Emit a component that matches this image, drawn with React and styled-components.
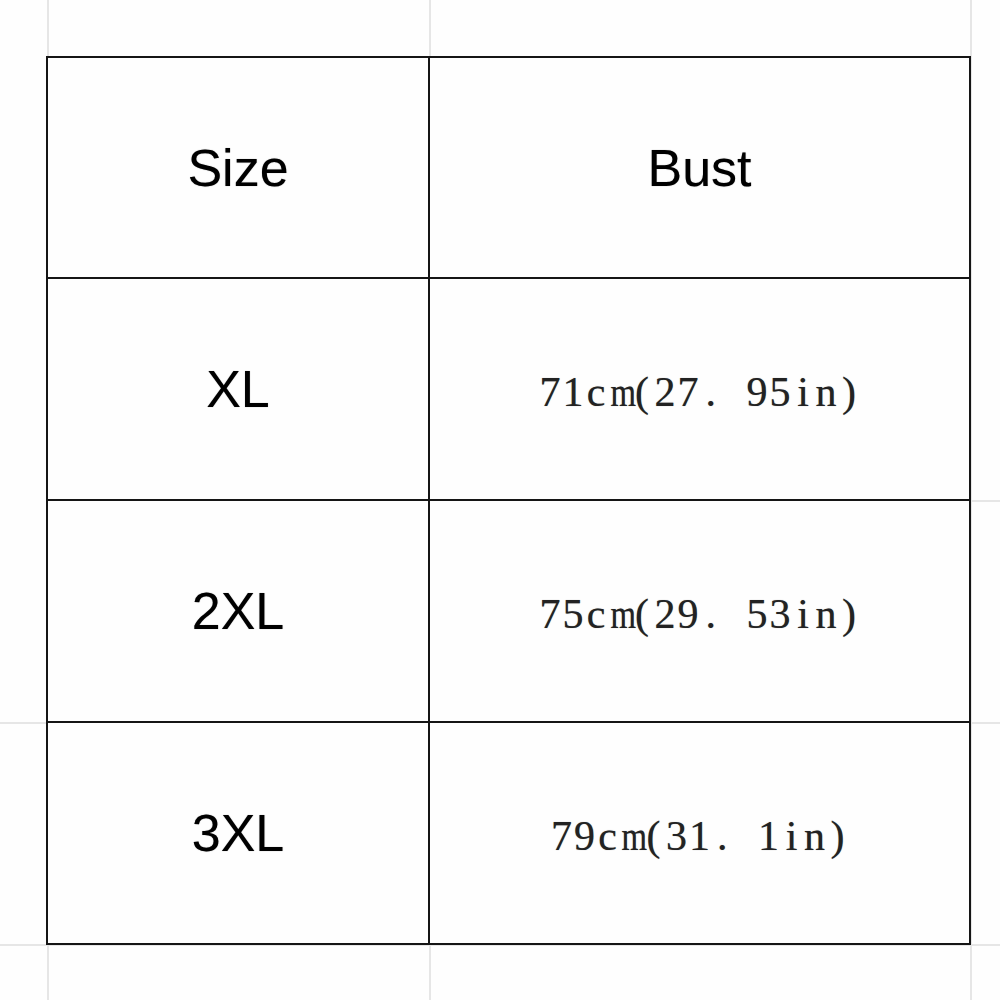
import React from "react";
import styled, { createGlobalStyle } from "styled-components";

const Global = createGlobalStyle`
  html, body { margin: 0; padding: 0; background: #fefefe; }
  #root { width: 1000px; height: 1000px; }
`;

const line = "#e6e6e6";
const ink = "#151515";

const Page = styled.div`
  box-sizing: border-box;
  width: 1000px;
  height: 1000px;
  padding: 56px 0 0 46px;
  background-color: #fefefe;
  background-image:
    linear-gradient(${line}, ${line}),
    linear-gradient(${line}, ${line}),
    linear-gradient(${line}, ${line}),
    linear-gradient(${line}, ${line}),
    linear-gradient(${line}, ${line}),
    linear-gradient(${line}, ${line});
  background-repeat: no-repeat;
  background-size:
    2px 1000px,
    2px 1000px,
    2px 1000px,
    1000px 2px,
    1000px 2px,
    30px 2px;
  background-position:
    47px 0,
    429px 0,
    970px 0,
    0 722px,
    0 944px,
    971px 500px;
`;

const Table = styled.div`
  display: grid;
  grid-template-columns: 382px 541px;
  grid-template-rows: 221px 222px 222px 222px;
  width: max-content;
  border-left: 2px solid ${ink};
  border-top: 2px solid ${ink};
  background: #fefefe;
`;

const Cell = styled.div`
  box-sizing: border-box;
  display: flex;
  align-items: center;
  justify-content: center;
  border-right: 2px solid ${ink};
  border-bottom: 2px solid ${ink};
  color: #000;
  font-family: "Liberation Sans", Arial, sans-serif;
  font-size: 52px;
  text-shadow: 0 0 1px rgba(0, 0, 0, 0.45);
`;

const Measure = styled.span`
  display: inline-flex;
  align-items: baseline;
  padding-top: 6px;
  font-family: "Liberation Serif", "Times New Roman", serif;
  font-size: 42px;
  color: #222;
  text-shadow: 0 0 0.8px rgba(0, 0, 0, 0.5);
`;

const Glyph = styled.span`
  display: inline-block;
  width: ${(p) => (p.$wide ? "46px" : "23px")};
  text-align: ${(p) => (p.$wide ? "left" : "center")};
  padding-left: ${(p) => (p.$wide ? "6px" : "0")};
  box-sizing: border-box;
  transform: ${(p) => (p.$narrow ? "scaleX(0.78)" : "none")};
`;

function Mono({ text }) {
  return (
    <Measure>
      {Array.from(text).map((ch, i) =>
        ch === "．" ? (
          <Glyph key={i} $wide>.</Glyph>
        ) : (
          <Glyph key={i} $narrow={ch === "m"}>{ch}</Glyph>
        )
      )}
    </Measure>
  );
}

const rows = [
  ["XL", "71cm(27．95in)"],
  ["2XL", "75cm(29．53in)"],
  ["3XL", "79cm(31．1in)"],
];

export default function App() {
  return (
    <>
      <Global />
      <Page>
        <Table>
          <Cell>Size</Cell>
          <Cell>Bust</Cell>
          {rows.map(([s, b]) => (
            <React.Fragment key={s}>
              <Cell>{s}</Cell>
              <Cell>
                <Mono text={b} />
              </Cell>
            </React.Fragment>
          ))}
        </Table>
      </Page>
    </>
  );
}
